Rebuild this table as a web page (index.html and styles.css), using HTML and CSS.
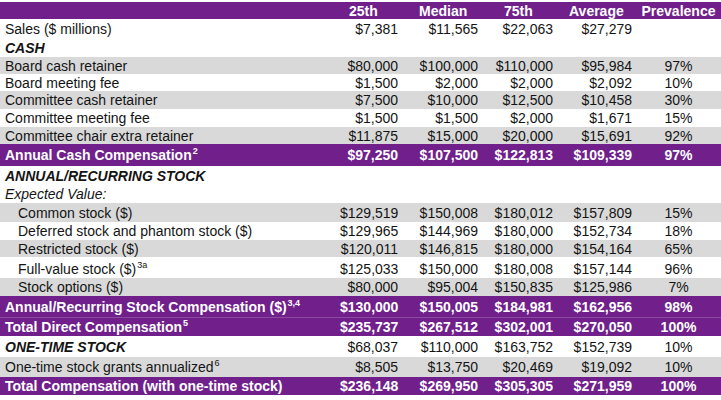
FILE: index.html
```html
<!DOCTYPE html>
<html>
<head>
<meta charset="utf-8">
<link rel="stylesheet" href="styles.css">
</head>
<body>
<div class="table">
  <div class="row head h17">
    <div class="lab"></div>
    <div class="hc c25">25th</div>
    <div class="hc cmed">Median</div>
    <div class="hc c75">75th</div>
    <div class="hc cavg">Average</div>
    <div class="hc cprev">Prevalence</div>
  </div>
  <div class="row h20">
    <div class="lab">Sales ($ millions)</div>
    <div class="num">$7,381</div><div class="num">$11,565</div><div class="num">$22,063</div><div class="num">$27,279</div><div class="pct"></div>
  </div>
  <div class="row h18">
    <div class="lab sec">CASH</div>
  </div>
  <div class="row gray h17">
    <div class="lab">Board cash retainer</div>
    <div class="num">$80,000</div><div class="num">$100,000</div><div class="num">$110,000</div><div class="num">$95,984</div><div class="pct">97%</div>
  </div>
  <div class="row h17">
    <div class="lab">Board meeting fee</div>
    <div class="num">$1,500</div><div class="num">$2,000</div><div class="num">$2,000</div><div class="num">$2,092</div><div class="pct">10%</div>
  </div>
  <div class="row gray h18">
    <div class="lab">Committee cash retainer</div>
    <div class="num">$7,500</div><div class="num">$10,000</div><div class="num">$12,500</div><div class="num">$10,458</div><div class="pct">30%</div>
  </div>
  <div class="row h18">
    <div class="lab">Committee meeting fee</div>
    <div class="num">$1,500</div><div class="num">$1,500</div><div class="num">$2,000</div><div class="num">$1,671</div><div class="pct">15%</div>
  </div>
  <div class="row gray h17">
    <div class="lab">Committee chair extra retainer</div>
    <div class="num">$11,875</div><div class="num">$15,000</div><div class="num">$20,000</div><div class="num">$15,691</div><div class="pct">92%</div>
  </div>
  <div class="row total h22">
    <div class="lab">Annual Cash Compensation<sup class="sup">2</sup></div>
    <div class="num">$97,250</div><div class="num">$107,500</div><div class="num">$122,813</div><div class="num">$109,339</div><div class="pct">97%</div>
  </div>
  <div class="row h19">
    <div class="lab sec">ANNUAL/RECURRING STOCK</div>
  </div>
  <div class="row h18">
    <div class="lab ital">Expected Value:</div>
  </div>
  <div class="row gray h19">
    <div class="lab sub">Common stock ($)</div>
    <div class="num">$129,519</div><div class="num">$150,008</div><div class="num">$180,012</div><div class="num">$157,809</div><div class="pct">15%</div>
  </div>
  <div class="row h18">
    <div class="lab sub">Deferred stock and phantom stock ($)</div>
    <div class="num">$129,965</div><div class="num">$144,969</div><div class="num">$180,000</div><div class="num">$152,734</div><div class="pct">18%</div>
  </div>
  <div class="row gray h17">
    <div class="lab sub">Restricted stock ($)</div>
    <div class="num">$120,011</div><div class="num">$146,815</div><div class="num">$180,000</div><div class="num">$154,164</div><div class="pct">65%</div>
  </div>
  <div class="row h21 low">
    <div class="lab sub">Full-value stock ($)<sup class="sup">3a</sup></div>
    <div class="num">$125,033</div><div class="num">$150,000</div><div class="num">$180,008</div><div class="num">$157,144</div><div class="pct">96%</div>
  </div>
  <div class="row gray h18">
    <div class="lab sub">Stock options ($)</div>
    <div class="num">$80,000</div><div class="num">$95,004</div><div class="num">$150,835</div><div class="num">$125,986</div><div class="pct">7%</div>
  </div>
  <div class="row total h21">
    <div class="lab">Annual/Recurring Stock Compensation ($)<sup class="sup">3,4</sup></div>
    <div class="num">$130,000</div><div class="num">$150,005</div><div class="num">$184,981</div><div class="num">$162,956</div><div class="pct">98%</div>
  </div>
  <div class="row total split h19">
    <div class="lab">Total Direct Compensation<sup class="sup">5</sup></div>
    <div class="num">$235,737</div><div class="num">$267,512</div><div class="num">$302,001</div><div class="num">$270,050</div><div class="pct">100%</div>
  </div>
  <div class="row h21">
    <div class="lab sec">ONE-TIME STOCK</div>
    <div class="num">$68,037</div><div class="num">$110,000</div><div class="num">$163,752</div><div class="num">$152,739</div><div class="pct">10%</div>
  </div>
  <div class="row gray h20">
    <div class="lab">One-time stock grants annualized<sup class="sup">6</sup></div>
    <div class="num">$8,505</div><div class="num">$13,750</div><div class="num">$20,469</div><div class="num">$19,092</div><div class="pct">10%</div>
  </div>
  <div class="row total h18">
    <div class="lab">Total Compensation (with one-time stock)</div>
    <div class="num">$236,148</div><div class="num">$269,950</div><div class="num">$305,305</div><div class="num">$271,959</div><div class="pct">100%</div>
  </div>
</div>
</body>
</html>
```
FILE: styles.css
```css
html, body {
  margin: 0;
  padding: 0;
  background: #ffffff;
}
body {
  font-family: "Liberation Sans", Arial, sans-serif;
  font-size: 14px;
  color: #141414;
  width: 721px;
  height: 400px;
  overflow: hidden;
}
.table {
  padding-top: 2px;
  display: flex;
  flex-direction: column;
}
.row {
  display: grid;
  grid-template-columns: 340px 62px 80px 75px 79px 85px;
  align-items: center;
  line-height: 16px;
  white-space: nowrap;
}
.h17 { height: 17px; }
.h18 { height: 18px; }
.h19 { height: 19px; }
.h20 { height: 20px; }
.h21 { height: 21px; }
.h22 { height: 22px; }
.row.low { align-items: end; padding-bottom: 1px; box-sizing: border-box; }
.gray { background: #d9d9d9; }
.head, .total {
  background: #71208b;
  color: #ffffff;
  font-weight: bold;
}
.split { box-shadow: inset 0 1px 0 #8a4aa0; }
.lab { padding-left: 5px; }
.lab.sub { padding-left: 18px; }
.sec { font-weight: bold; font-style: italic; }
.ital { font-style: italic; }
.num { text-align: right; padding-right: 4px; }
.pct { text-align: center; }
.hc { text-align: left; }
.c25 { padding-left: 9px; }
.cmed { padding-left: 17px; }
.c75 { padding-left: 22px; }
.cavg { padding-left: 12px; }
.cprev { text-align: center; }
.sup {
  font-size: 9px;
  line-height: 0;
  vertical-align: 6px;
  margin-left: 1px;
}
```
